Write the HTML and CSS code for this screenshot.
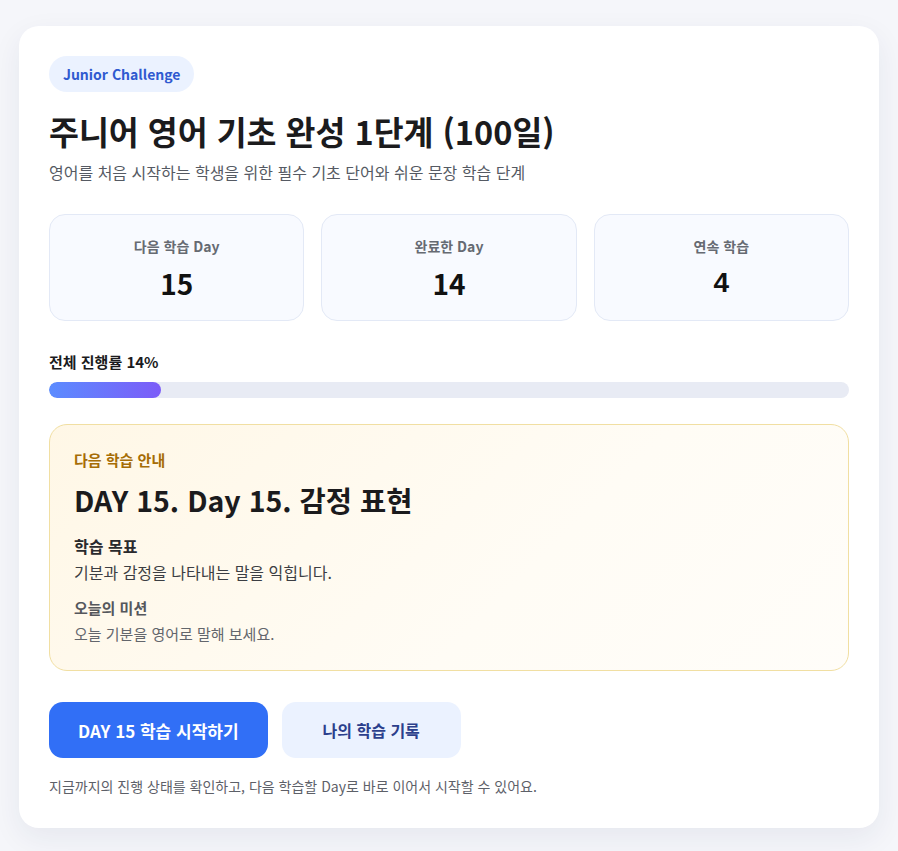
FILE: index.html
```html
<!DOCTYPE html>
<html lang="ko">
<head>
<meta charset="utf-8">
<title>주니어 영어 기초 완성 1단계</title>
<link rel="stylesheet" href="styles.css">
</head>
<body>
<main class="card">
  <span class="badge">Junior Challenge</span>
  <h1 class="title">주니어 영어 기초 완성 1단계 (100일)</h1>
  <p class="subtitle">영어를 처음 시작하는 학생을 위한 필수 기초 단어와 쉬운 문장 학습 단계</p>

  <section class="stats">
    <div class="stat">
      <div class="stat-label">다음 학습 Day</div>
      <div class="stat-value">15</div>
    </div>
    <div class="stat">
      <div class="stat-label">완료한 Day</div>
      <div class="stat-value">14</div>
    </div>
    <div class="stat">
      <div class="stat-label">연속 학습</div>
      <div class="stat-value stat-value-alt">4</div>
    </div>
  </section>

  <section class="progress">
    <div class="progress-label">전체 진행률 14%</div>
    <div class="progress-track"><div class="progress-fill" style="width:14%"></div></div>
  </section>

  <section class="next">
    <div class="next-kicker">다음 학습 안내</div>
    <h2 class="next-title">DAY 15. Day 15. 감정 표현</h2>
    <div class="next-head">학습 목표</div>
    <p class="next-text">기분과 감정을 나타내는 말을 익힙니다.</p>
    <div class="mission-head">오늘의 미션</div>
    <p class="mission-text">오늘 기분을 영어로 말해 보세요.</p>
  </section>

  <div class="actions">
    <button class="btn btn-primary">DAY 15 학습 시작하기</button>
    <button class="btn btn-secondary">나의 학습 기록</button>
  </div>

  <p class="footnote">지금까지의 진행 상태를 확인하고, 다음 학습할 Day로 바로 이어서 시작할 수 있어요.</p>
</main>
</body>
</html>
```

FILE: styles.css
```css
* { box-sizing: border-box; }
html, body { margin: 0; padding: 0; }
body {
  background: #f5f6fa;
  font-family: "Noto Sans CJK KR", "Noto Sans", sans-serif;
  color: #1d1d1f;
  padding: 26px 19px 23px;
}
.card {
  background: #ffffff;
  border-radius: 20px;
  padding: 30px 30px 31px;
  box-shadow: 0 10px 30px rgba(30, 45, 90, 0.07);
}
.badge {
  display: inline-flex;
  align-items: center;
  height: 36px;
  padding: 0 14px;
  border-radius: 18px;
  background: #ebf2ff;
  color: #2f5ad0;
  font-size: 14px;
  font-weight: 700;
}
.title {
  margin: 16px 0 0;
  font-size: 32.5px;
  line-height: 46px;
  font-weight: 700;
  color: #1b1b1d;
}
.subtitle {
  margin: 6px 0 0;
  font-size: 16px;
  line-height: 24px;
  color: #555a63;
}
.stats {
  display: grid;
  grid-template-columns: repeat(3, 1fr);
  gap: 17px;
  margin-top: 30px;
}
.stat {
  height: 107px;
  background: #f8faff;
  border: 1px solid #e3e9f6;
  border-radius: 16px;
  display: flex;
  flex-direction: column;
  align-items: center;
  padding-top: 21px;
}
.stat-label {
  font-size: 14px;
  line-height: 20px;
  font-weight: 700;
  color: #666a72;
}
.stat-value {
  margin-top: 10px;
  font-size: 28px;
  line-height: 34px;
  font-weight: 700;
  color: #111;
}
.stat-value-alt {
  font-family: "Liberation Sans", Arial, sans-serif;
  font-size: 28px;
}
.progress { margin-top: 30px; }
.progress-label {
  font-size: 15px;
  line-height: 22px;
  font-weight: 700;
  color: #1b1b1d;
}
.progress-track {
  margin-top: 9px;
  height: 16px;
  background: #e8ebf4;
  border-radius: 8px;
  overflow: hidden;
}
.progress-fill {
  height: 100%;
  border-radius: 8px;
  background: linear-gradient(90deg, #5b8cff, #7c5cf8);
}
.next {
  margin-top: 26px;
  border: 1px solid #f1dfa2;
  border-radius: 18px;
  background: linear-gradient(135deg, #fff7e6 0%, #fffcf5 60%, #fffdf9 100%);
  padding: 24px 24px 24px;
}
.next-kicker {
  font-size: 15px;
  line-height: 22px;
  font-weight: 700;
  color: #a66d06;
}
.next-title {
  margin: 10px 0 0;
  font-size: 28.5px;
  line-height: 38px;
  font-weight: 700;
  color: #1b1b1d;
}
.next-head {
  margin-top: 15px;
  font-size: 16px;
  line-height: 24px;
  font-weight: 700;
  color: #2a2a2d;
}
.next-text {
  margin: 2px 0 0;
  font-size: 16px;
  line-height: 24px;
  color: #3c3e43;
}
.mission-head {
  margin-top: 12px;
  font-size: 15px;
  line-height: 24px;
  font-weight: 700;
  color: #55575c;
}
.mission-text {
  margin: 2px 0 0;
  font-size: 15px;
  line-height: 24px;
  color: #63666c;
}
.actions {
  display: flex;
  gap: 14px;
  margin-top: 31px;
}
.btn {
  height: 56px;
  border: none;
  border-radius: 14px;
  font-family: inherit;
  font-weight: 700;
  cursor: pointer;
}
.btn-primary {
  background: #316ff6;
  color: #ffffff;
  font-size: 17px;
  padding: 0 29px;
}
.btn-secondary {
  background: #ebf2ff;
  color: #2b3f8c;
  font-size: 16px;
  padding: 0 41px;
}
.footnote {
  margin: 17px 0 0;
  font-size: 14px;
  line-height: 22px;
  color: #5d6068;
}
```
